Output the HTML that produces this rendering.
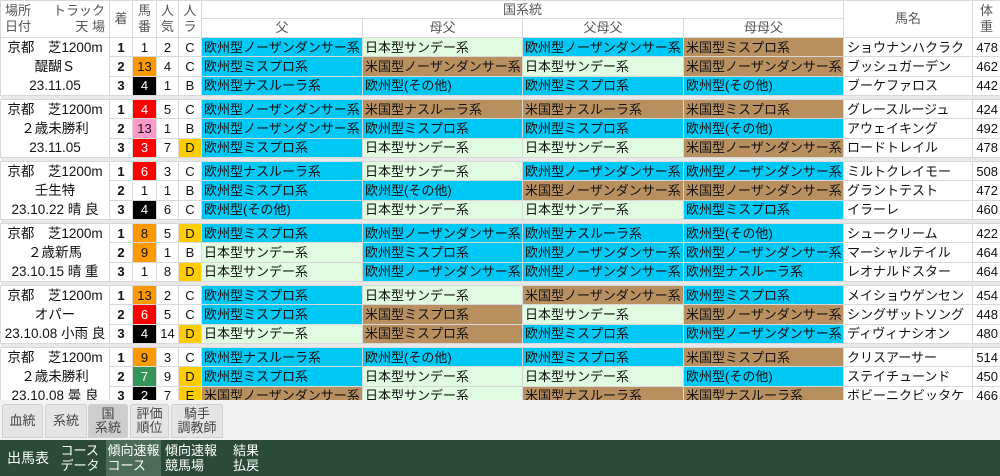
<!DOCTYPE html>
<html><head><meta charset="utf-8">
<style>
*{margin:0;padding:0;box-sizing:border-box}
body{width:1000px;height:476px;overflow:hidden;background:#fff;font-family:"Liberation Sans","Noto Sans CJK JP",sans-serif;color:#111}
table{border-collapse:collapse;table-layout:fixed;width:1000px;position:absolute;left:0;top:0}
td,th{border:1px solid #d8d8d8;font-size:13px;line-height:17px;white-space:nowrap;overflow:hidden;padding:0}
th{font-weight:normal;color:#555;background:#fff;font-size:13px;line-height:16px}
tr.r td{height:19px}
tr.sep td{height:4px;background:#e8e8e8;border-left:none;border-right:none}
.pl{text-align:center;line-height:19px;font-size:13.5px}
.c{text-align:center}
.b{font-weight:bold}
.E{background:#00c8f5}
.U{background:#b89060}
.J{background:#e0fbe0}
.s{padding-left:2px}
.o{background:#ff9900}.k{background:#000;color:#fff}.rd{background:#ff0000;color:#fff}.pk{background:#ff99cc}.gr{background:#33955a;color:#fff}
.y{background:#ffcc00}
.nm{padding-left:3px;font-size:13px}
.w{text-align:right;padding-right:2px}
#tabs{position:absolute;top:400px;left:0;width:1000px;height:40px;background:#f2f2f2}
.tab{position:absolute;top:4px;height:34px;background:#e4e4e4;border:1px solid #d0d0d0;border-radius:3px 3px 0 0;font-size:13px;color:#444;text-align:center;display:flex;align-items:center;justify-content:center;line-height:14px}
#nav{position:absolute;top:440px;left:0;width:1000px;height:36px;background:#2b4a37;color:#fff}
.nv{position:absolute;top:0;height:36px;font-size:13px;line-height:15px;display:flex;flex-direction:column;justify-content:center;align-items:center}
</style></head><body>
<table>
<colgroup><col style="width:109px"><col style="width:23px"><col style="width:24px"><col style="width:22px"><col style="width:23px"><col style="width:161px"><col style="width:160px"><col style="width:161px"><col style="width:160px"><col style="width:129px"><col style="width:28px"></colgroup>
<tr style="height:18px"><th rowspan="2" style="text-align:left;padding:0 4px"><div style="display:flex;justify-content:space-between"><span>場所</span><span>トラック</span></div><div style="display:flex;justify-content:space-between"><span>日付</span><span>天 場</span></div></th><th rowspan="2">着</th><th rowspan="2">馬<br>番</th><th rowspan="2">人<br>気</th><th rowspan="2">人<br>ラ</th><th colspan="4">国系統</th><th rowspan="2">馬名</th><th rowspan="2">体<br>重</th></tr>
<tr style="height:19px"><th>父</th><th>母父</th><th>父母父</th><th>母母父</th></tr>

<tr class="r"><td rowspan="3" class="pl">京都　芝1200m<br>醍醐Ｓ<br>23.11.05</td><td class="c b">1</td><td class="c">1</td><td class="c">2</td><td class="c">C</td><td class="s E">欧州型ノーザンダンサー系</td><td class="s J">日本型サンデー系</td><td class="s E">欧州型ノーザンダンサー系</td><td class="s U">米国型ミスプロ系</td><td class="nm">ショウナンハクラク</td><td class="w">478</td></tr>
<tr class="r"><td class="c b">2</td><td class="c o">13</td><td class="c">4</td><td class="c">C</td><td class="s E">欧州型ミスプロ系</td><td class="s U">米国型ノーザンダンサー系</td><td class="s J">日本型サンデー系</td><td class="s U">米国型ノーザンダンサー系</td><td class="nm">ブッシュガーデン</td><td class="w">462</td></tr>
<tr class="r"><td class="c b">3</td><td class="c k">4</td><td class="c">1</td><td class="c">B</td><td class="s E">欧州型ナスルーラ系</td><td class="s E">欧州型(その他)</td><td class="s E">欧州型ミスプロ系</td><td class="s E">欧州型(その他)</td><td class="nm">ブーケファロス</td><td class="w">442</td></tr>
<tr class="sep"><td colspan="11"></td></tr>

<tr class="r"><td rowspan="3" class="pl">京都　芝1200m<br>２歳未勝利<br>23.11.05</td><td class="c b">1</td><td class="c rd">4</td><td class="c">5</td><td class="c">C</td><td class="s E">欧州型ノーザンダンサー系</td><td class="s U">米国型ナスルーラ系</td><td class="s U">米国型ナスルーラ系</td><td class="s U">米国型ミスプロ系</td><td class="nm">グレースルージュ</td><td class="w">424</td></tr>
<tr class="r"><td class="c b">2</td><td class="c pk">13</td><td class="c">1</td><td class="c">B</td><td class="s E">欧州型ノーザンダンサー系</td><td class="s E">欧州型ミスプロ系</td><td class="s E">欧州型ミスプロ系</td><td class="s E">欧州型(その他)</td><td class="nm">アウェイキング</td><td class="w">492</td></tr>
<tr class="r"><td class="c b">3</td><td class="c rd">3</td><td class="c">7</td><td class="c y">D</td><td class="s E">欧州型ミスプロ系</td><td class="s J">日本型サンデー系</td><td class="s J">日本型サンデー系</td><td class="s U">米国型ノーザンダンサー系</td><td class="nm">ロードトレイル</td><td class="w">478</td></tr>
<tr class="sep"><td colspan="11"></td></tr>

<tr class="r"><td rowspan="3" class="pl">京都　芝1200m<br>壬生特<br>23.10.22 晴 良</td><td class="c b">1</td><td class="c rd">6</td><td class="c">3</td><td class="c">C</td><td class="s E">欧州型ナスルーラ系</td><td class="s J">日本型サンデー系</td><td class="s E">欧州型ノーザンダンサー系</td><td class="s E">欧州型ノーザンダンサー系</td><td class="nm">ミルトクレイモー</td><td class="w">508</td></tr>
<tr class="r"><td class="c b">2</td><td class="c">1</td><td class="c">1</td><td class="c">B</td><td class="s E">欧州型ミスプロ系</td><td class="s E">欧州型(その他)</td><td class="s U">米国型ノーザンダンサー系</td><td class="s U">米国型ノーザンダンサー系</td><td class="nm">グラントテスト</td><td class="w">472</td></tr>
<tr class="r"><td class="c b">3</td><td class="c k">4</td><td class="c">6</td><td class="c">C</td><td class="s E">欧州型(その他)</td><td class="s J">日本型サンデー系</td><td class="s J">日本型サンデー系</td><td class="s E">欧州型ミスプロ系</td><td class="nm">イラーレ</td><td class="w">460</td></tr>
<tr class="sep"><td colspan="11"></td></tr>

<tr class="r"><td rowspan="3" class="pl">京都　芝1200m<br>２歳新馬<br>23.10.15 晴 重</td><td class="c b">1</td><td class="c o">8</td><td class="c">5</td><td class="c y">D</td><td class="s E">欧州型ミスプロ系</td><td class="s E">欧州型ノーザンダンサー系</td><td class="s E">欧州型ナスルーラ系</td><td class="s E">欧州型(その他)</td><td class="nm">シュークリーム</td><td class="w">422</td></tr>
<tr class="r"><td class="c b">2</td><td class="c o">9</td><td class="c">1</td><td class="c">B</td><td class="s J">日本型サンデー系</td><td class="s E">欧州型ミスプロ系</td><td class="s E">欧州型ノーザンダンサー系</td><td class="s E">欧州型ノーザンダンサー系</td><td class="nm">マーシャルテイル</td><td class="w">464</td></tr>
<tr class="r"><td class="c b">3</td><td class="c">1</td><td class="c">8</td><td class="c y">D</td><td class="s J">日本型サンデー系</td><td class="s E">欧州型ノーザンダンサー系</td><td class="s E">欧州型ノーザンダンサー系</td><td class="s E">欧州型ナスルーラ系</td><td class="nm">レオナルドスター</td><td class="w">464</td></tr>
<tr class="sep"><td colspan="11"></td></tr>

<tr class="r"><td rowspan="3" class="pl">京都　芝1200m<br>オパー<br>23.10.08 小雨 良</td><td class="c b">1</td><td class="c o">13</td><td class="c">2</td><td class="c">C</td><td class="s E">欧州型ミスプロ系</td><td class="s J">日本型サンデー系</td><td class="s U">米国型ノーザンダンサー系</td><td class="s E">欧州型ミスプロ系</td><td class="nm">メイショウゲンセン</td><td class="w">454</td></tr>
<tr class="r"><td class="c b">2</td><td class="c rd">6</td><td class="c">5</td><td class="c">C</td><td class="s E">欧州型ミスプロ系</td><td class="s U">米国型ミスプロ系</td><td class="s J">日本型サンデー系</td><td class="s U">米国型ノーザンダンサー系</td><td class="nm">シングザットソング</td><td class="w">448</td></tr>
<tr class="r"><td class="c b">3</td><td class="c k">4</td><td class="c">14</td><td class="c y">D</td><td class="s J">日本型サンデー系</td><td class="s U">米国型ミスプロ系</td><td class="s E">欧州型ミスプロ系</td><td class="s E">欧州型ノーザンダンサー系</td><td class="nm">ディヴィナシオン</td><td class="w">480</td></tr>
<tr class="sep"><td colspan="11"></td></tr>

<tr class="r"><td rowspan="3" class="pl">京都　芝1200m<br>２歳未勝利<br>23.10.08 曇 良</td><td class="c b">1</td><td class="c o">9</td><td class="c">3</td><td class="c">C</td><td class="s E">欧州型ナスルーラ系</td><td class="s E">欧州型(その他)</td><td class="s E">欧州型ミスプロ系</td><td class="s U">米国型ミスプロ系</td><td class="nm">クリスアーサー</td><td class="w">514</td></tr>
<tr class="r"><td class="c b">2</td><td class="c gr">7</td><td class="c">9</td><td class="c y">D</td><td class="s E">欧州型ミスプロ系</td><td class="s J">日本型サンデー系</td><td class="s J">日本型サンデー系</td><td class="s E">欧州型(その他)</td><td class="nm">ステイチューンド</td><td class="w">450</td></tr>
<tr class="r"><td class="c b">3</td><td class="c k">2</td><td class="c">7</td><td class="c y">E</td><td class="s U">米国型ノーザンダンサー系</td><td class="s J">日本型サンデー系</td><td class="s U">米国型ナスルーラ系</td><td class="s U">米国型ナスルーラ系</td><td class="nm">ボビーニクビッタケ</td><td class="w">466</td></tr>
</table>

<div id="tabs">
<div class="tab" style="left:2px;width:41px">血統</div>
<div class="tab" style="left:45px;width:42px">系統</div>
<div class="tab" style="left:88px;width:40px;background:#cdcdcd">国<br>系統</div>
<div class="tab" style="left:130px;width:39px">評価<br>順位</div>
<div class="tab" style="left:171px;width:52px">騎手<br>調教師</div>
</div>
<div id="nav">
<div class="nv" style="left:0;width:56px;font-size:14px">出馬表</div>
<div class="nv" style="left:58px;width:44px">コース<br>データ</div>
<div class="nv" style="left:106px;width:55px;background:#4c6b58">傾向速報<br>コース</div>
<div class="nv" style="left:164px;width:54px">傾向速報<br>競馬場</div>
<div class="nv" style="left:228px;width:36px">結果<br>払戻</div>
</div>
</body></html>
